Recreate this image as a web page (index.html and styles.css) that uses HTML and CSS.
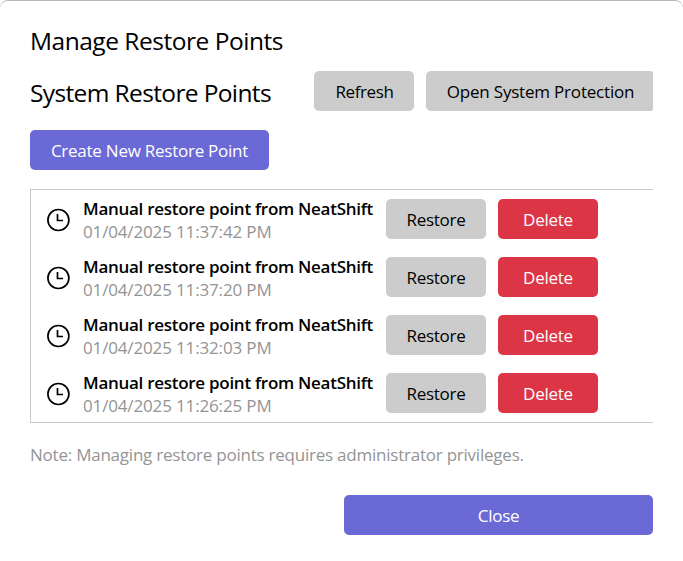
FILE: index.html
```html
<!DOCTYPE html>
<html lang="en">
<head>
<meta charset="utf-8">
<title>Manage Restore Points</title>
<link rel="stylesheet" href="styles.css">
</head>
<body>
<main class="dialog">
  <h1>Manage Restore Points</h1>
  <div class="header">
    <h2>System Restore Points</h2>
    <button class="btn refresh">Refresh</button>
    <button class="btn protection">Open System Protection</button>
  </div>
  <button class="btn primary create">Create New Restore Point</button>
  <ul class="list">
    <li class="row">
      <svg class="clock" viewBox="0 0 24 24"><circle cx="12.4" cy="12" r="10.5"/><path d="M11.5 6V12.5H17"/></svg>
      <div class="info"><strong>Manual restore point from NeatShift</strong><time>01/04/2025 11:37:42 PM</time></div>
      <button class="btn restore">Restore</button><button class="btn danger">Delete</button>
    </li>
    <li class="row">
      <svg class="clock" viewBox="0 0 24 24"><circle cx="12.4" cy="12" r="10.5"/><path d="M11.5 6V12.5H17"/></svg>
      <div class="info"><strong>Manual restore point from NeatShift</strong><time>01/04/2025 11:37:20 PM</time></div>
      <button class="btn restore">Restore</button><button class="btn danger">Delete</button>
    </li>
    <li class="row">
      <svg class="clock" viewBox="0 0 24 24"><circle cx="12.4" cy="12" r="10.5"/><path d="M11.5 6V12.5H17"/></svg>
      <div class="info"><strong>Manual restore point from NeatShift</strong><time>01/04/2025 11:32:03 PM</time></div>
      <button class="btn restore">Restore</button><button class="btn danger">Delete</button>
    </li>
    <li class="row">
      <svg class="clock" viewBox="0 0 24 24"><circle cx="12.4" cy="12" r="10.5"/><path d="M11.5 6V12.5H17"/></svg>
      <div class="info"><strong>Manual restore point from NeatShift</strong><time>01/04/2025 11:26:25 PM</time></div>
      <button class="btn restore">Restore</button><button class="btn danger">Delete</button>
    </li>
  </ul>
  <p class="note">Note: Managing restore points requires administrator privileges.</p>
  <button class="btn primary close">Close</button>
</main>
</body>
</html>
```
FILE: styles.css
```css
* { box-sizing: border-box; }
body {
  margin: 0;
  background: #fff;
  color: #000;
  font-family: "Open Sans", "Noto Sans", sans-serif;
  font-size: 17px;
}
.dialog {
  display: flex;
  flex-direction: column;
  height: 561px;
  padding: 23px 30px 0;
  border-top: 1px solid #b8b8b8;
  border-radius: 8px 8px 0 0;
  overflow: hidden;
  white-space: nowrap;
}
h1, h2 { margin: 0; font-size: 24.5px; font-weight: 400; line-height: 34px; }
h1 { height: 34px; letter-spacing: -0.48px; }
.header { display: flex; align-items: center; height: 40px; margin-top: 13px; overflow: hidden; }
h2 { flex: 0 0 284px; padding-top: 4px; letter-spacing: -0.63px; }
.btn {
  flex: none;
  height: 40px;
  padding: 1px 0 0;
  border: 0;
  border-radius: 5px;
  background: #ccc;
  color: #000;
  font: inherit;
  line-height: 24px;
  letter-spacing: -0.25px;
}
.refresh { width: 100px; margin-right: 12px; padding-left: 1px; letter-spacing: -0.4px; }
.protection { width: 229px; letter-spacing: -0.2px; }
.primary { background: #6b69d6; color: #fff; }
.create { width: 239px; margin-top: 19px; }
.list {
  flex: none;
  height: 234px;
  margin: 19px 0 0;
  padding: 0;
  border: 1px solid #c8c8c8;
  border-right: 0;
  list-style: none;
}
.row { display: flex; align-items: center; height: 58px; }
.clock { flex: none; width: 24px; height: 24px; margin: 2px 13px 0 15px; fill: none; stroke: #000; stroke-width: 1.7; }
.info { flex: none; width: 303px; padding-top: 2px; line-height: 23px; }
.info strong, .info time { display: block; }
.info strong { font-weight: 600; letter-spacing: -0.28px; }
.info time { color: #949494; letter-spacing: -0.15px; }
.restore { width: 100px; }
.danger { width: 100px; margin-left: 12px; background: #dc3545; color: #fff; }
.note { margin: 20px 0 0; line-height: 24px; color: #949494; letter-spacing: -0.23px; }
.close { width: 309px; margin: 28px 0 0 auto; }
```
